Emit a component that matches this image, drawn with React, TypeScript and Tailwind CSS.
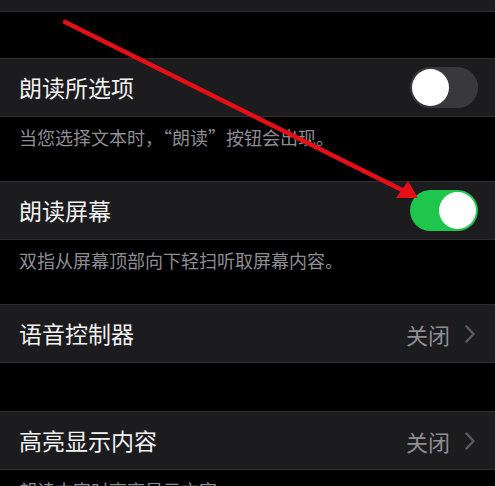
const font = { fontFamily: '"Noto Sans CJK SC", "Noto Sans", sans-serif' };

function Toggle({ on }: { on: boolean }) {
  return (
    <div
      className={`flex h-[41px] w-[68px] items-center rounded-full px-[2px] ${
        on ? "justify-end bg-[#1ec64b]" : "justify-start bg-[#39393d]"
      }`}
    >
      <div className="h-[37px] w-[37px] rounded-full bg-white" />
    </div>
  );
}

function Chevron() {
  return (
    <svg width="10" height="18" viewBox="0 0 10 18" fill="none">
      <path d="M1.5 1.5 L8.5 9 L1.5 16.5" stroke="#5c5c60" strokeWidth="2.4" strokeLinecap="round" strokeLinejoin="round" />
    </svg>
  );
}

function Row({ title, right }: { title: string; right: React.ReactNode }) {
  return (
    <div className="flex h-[59px] items-center justify-between border-y border-[#2e2e30] bg-[#1c1c1e] pl-[19px] pr-[17px]">
      <span className="text-[23px] leading-none text-[#f2f2f2]">{title}</span>
      {right}
    </div>
  );
}

function Value() {
  return (
    <div className="flex items-center gap-[15px] pr-[3px]">
      <span className="text-[22px] leading-none text-[#8e8e93]">关闭</span>
      <Chevron />
    </div>
  );
}

function Footer({ text, h }: { text: string; h: string }) {
  return (
    <div className={`${h} pl-[19px] pt-[10px] text-[18px] leading-[20px] text-[#8d8d92]`}>{text}</div>
  );
}

export default function App() {
  return (
    <div className="relative h-[486px] w-[495px] overflow-hidden bg-black" style={font}>
      <div className="h-[12px] border-b border-[#2e2e30] bg-[#1c1c1e]" />
      <div className="h-[46px]" />
      <Row title="朗读所选项" right={<Toggle on={false} />} />
      <Footer h="h-[64px]" text="当您选择文本时，“朗读”按钮会出现。" />
      <Row title="朗读屏幕" right={<Toggle on={true} />} />
      <Footer h="h-[64px]" text="双指从屏幕顶部向下轻扫听取屏幕内容。" />
      <Row title="语音控制器" right={<Value />} />
      <div className="h-[48px]" />
      <Row title="高亮显示内容" right={<Value />} />
      <Footer h="h-[40px]" text="朗读内容时高亮显示文字。" />

      <svg className="pointer-events-none absolute left-0 top-0" width="495" height="486" viewBox="0 0 495 486">
        <line x1="65" y1="22" x2="402" y2="190" stroke="#e60f17" strokeWidth="4.5" strokeLinecap="round" />
        <polygon points="418,198 396,198 408,181" fill="#e60f17" />
      </svg>
    </div>
  );
}
